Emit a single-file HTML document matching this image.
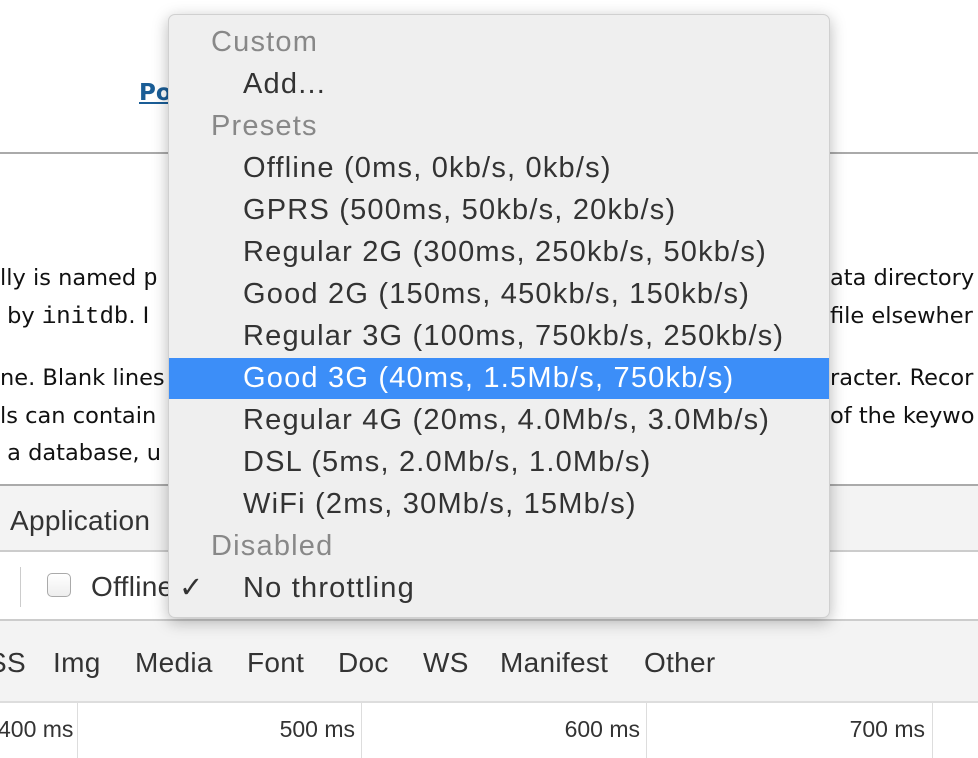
<!DOCTYPE html>
<html><head><meta charset="utf-8"><style>
body{margin:0;width:978px;height:758px;overflow:hidden;position:relative;background:#fff;font-family:"Liberation Sans",sans-serif}
.a{position:absolute;white-space:nowrap}
.bt{font-family:"DejaVu Sans",sans-serif;font-size:22.5px;color:#111}
.mono{font-family:"Liberation Mono",monospace;font-size:24px}
.dt{font-size:28px;color:#333;letter-spacing:0.3px}
#menu{position:absolute;left:168px;top:14px;width:662px;height:604px;background:#efefef;border-radius:7px;box-shadow:0 4px 16px rgba(0,0,0,.28);border:1px solid #d0d0d0;box-sizing:border-box}
#menu div{position:absolute;white-space:nowrap;font-size:29px;line-height:42px;height:42px;letter-spacing:1.2px}
.h{left:42px;color:#888}
.i{left:74px;color:#333}
.sel{left:0;right:0;background:#3c8ef8;}
</style></head><body>
<div class="a" style="left:139px;top:80px;font-family:'DejaVu Sans',sans-serif;font-weight:bold;font-size:23px;color:#1a5d96;text-decoration:underline">Po</div>
<div class="a" style="left:0;top:152px;width:978px;height:2px;background:#aaa"></div>
<div class="a bt" style="left:0;top:265px">lly is named <span class="mono">p</span></div>
<div class="a bt" style="left:0;top:303px">&nbsp;by <span class="mono">initdb</span>. I</div>
<div class="a bt" style="left:0;top:365px">ne. Blank lines</div>
<div class="a bt" style="left:0;top:403px">ls can contain</div>
<div class="a bt" style="left:0;top:440px">&nbsp;a database, u</div>
<div class="a bt" style="left:830px;top:265px">ata directory</div>
<div class="a bt" style="left:830px;top:303px">file elsewher</div>
<div class="a bt" style="left:830px;top:365px">racter. Recor</div>
<div class="a bt" style="left:830px;top:403px">of the keywo</div>
<div class="a" style="left:0;top:484px;width:978px;height:68px;background:#f3f3f3;border-top:2px solid #aaa;border-bottom:2px solid #ccc;box-sizing:border-box"></div>
<div class="a dt" style="left:10px;top:505px">Application</div>
<div class="a" style="left:20px;top:567px;width:1px;height:40px;background:#ccc"></div>
<div class="a" style="left:47px;top:573px;width:24px;height:24px;border:1px solid #aaa;border-radius:5px;background:linear-gradient(#fff,#eee);box-sizing:border-box"></div>
<div class="a dt" style="left:91px;top:571px">Offline</div>
<div class="a" style="left:0;top:619px;width:978px;height:84px;background:#f3f3f3;border-top:2px solid #ccc;border-bottom:2px solid #ddd;box-sizing:border-box"></div>
<div class="a dt" style="left:-12px;top:647px">SS</div>
<div class="a dt" style="left:53px;top:647px">Img</div>
<div class="a dt" style="left:135px;top:647px">Media</div>
<div class="a dt" style="left:247px;top:647px">Font</div>
<div class="a dt" style="left:338px;top:647px">Doc</div>
<div class="a dt" style="left:423px;top:647px">WS</div>
<div class="a dt" style="left:500px;top:647px">Manifest</div>
<div class="a dt" style="left:644px;top:647px">Other</div>
<div class="a" style="left:77px;top:703px;width:1px;height:55px;background:#ddd"></div>
<div class="a" style="left:361px;top:703px;width:1px;height:55px;background:#ddd"></div>
<div class="a" style="left:646px;top:703px;width:1px;height:55px;background:#ddd"></div>
<div class="a" style="left:932px;top:703px;width:1px;height:55px;background:#ddd"></div>
<div class="a" style="top:716px;left:-2px;font-size:23px;color:#333">400 ms</div>
<div class="a" style="top:716px;right:623px;font-size:23px;color:#333">500 ms</div>
<div class="a" style="top:716px;right:338px;font-size:23px;color:#333">600 ms</div>
<div class="a" style="top:716px;right:53px;font-size:23px;color:#333">700 ms</div>
<div id="menu">
<div class="h" style="top:6px">Custom</div>
<div class="i" style="top:48px">Add...</div>
<div class="h" style="top:90px">Presets</div>
<div class="i" style="top:132px">Offline (0ms, 0kb/s, 0kb/s)</div>
<div class="i" style="top:174px">GPRS (500ms, 50kb/s, 20kb/s)</div>
<div class="i" style="top:216px">Regular 2G (300ms, 250kb/s, 50kb/s)</div>
<div class="i" style="top:258px">Good 2G (150ms, 450kb/s, 150kb/s)</div>
<div class="i" style="top:300px">Regular 3G (100ms, 750kb/s, 250kb/s)</div>
<div class="sel" style="top:343px;height:41px"></div>
<div class="i" style="top:342px;color:#fff">Good 3G (40ms, 1.5Mb/s, 750kb/s)</div>
<div class="i" style="top:384px">Regular 4G (20ms, 4.0Mb/s, 3.0Mb/s)</div>
<div class="i" style="top:426px">DSL (5ms, 2.0Mb/s, 1.0Mb/s)</div>
<div class="i" style="top:468px">WiFi (2ms, 30Mb/s, 15Mb/s)</div>
<div class="h" style="top:510px">Disabled</div>
<div style="left:10px;top:552px;color:#333">✓</div>
<div class="i" style="top:552px">No throttling</div>
</div>
</body></html>
